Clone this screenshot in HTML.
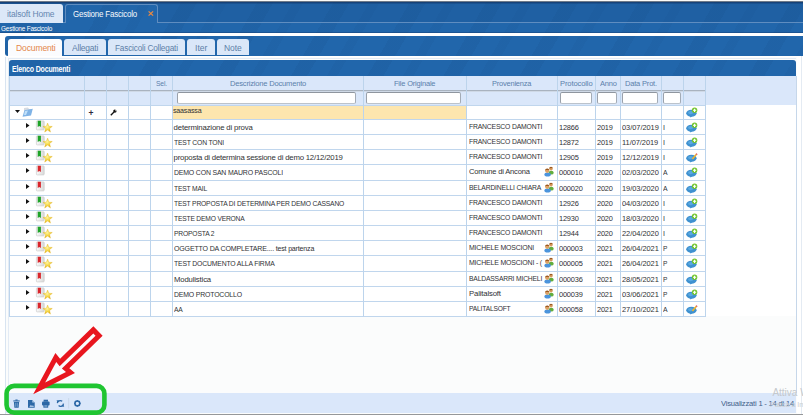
<!DOCTYPE html>
<html><head><meta charset="utf-8"><style>
*{margin:0;padding:0;box-sizing:border-box}
html,body{width:803px;height:418px;overflow:hidden;background:#fff;font-family:"Liberation Sans",sans-serif}
.a{position:absolute}
.bl{background-color:#2166ab;background-image:repeating-linear-gradient(120deg,rgba(0,0,0,0) 0 26px,rgba(8,36,80,.06) 26px 40px,rgba(0,0,0,0) 40px 57px,rgba(8,36,80,.04) 57px 66px);background-attachment:fixed}
.t{position:absolute;white-space:nowrap;line-height:1;transform-origin:0 0}
.ic{position:absolute;overflow:visible}
.vl{position:absolute;width:1px;background:#bcd4ec}
.hl{position:absolute;height:1px;background:#c0d6ed}
.inp{position:absolute;background:#fff;border:1px solid #a3abb5;border-top-color:#8f969f;border-left-color:#9aa1aa;border-bottom-color:#bcc3cb;border-radius:2px;height:12px;top:91.5px}
</style></head><body>

<div class="a" style="left:0;top:0;width:803px;height:1px;background:#fbfaf8"></div>
<div class="a" style="left:0;top:1px;width:803px;height:1px;background:#6f7a88"></div>
<div class="a bl" style="left:0;top:2px;width:803px;height:30.5px"></div>
<div class="a" style="left:0;top:2px;width:803px;height:20px;background:rgba(10,30,70,.07)"></div>
<div class="a" style="left:0;top:2px;width:803px;height:1px;background:rgba(10,30,70,.45)"></div>
<div class="a" style="left:0;top:3px;width:803px;height:1px;background:rgba(10,30,70,.2)"></div>
<div class="a" style="left:0;top:31.6px;width:803px;height:1px;background:rgba(10,30,70,.25)"></div>
<div class="a" style="left:0;top:22.4px;width:803px;height:1px;background:#5f8dc0"></div>
<div class="a" style="left:0;top:4.3px;width:63px;height:18.6px;background:#dce8f8;border-radius:0 3px 0 0"></div>
<div class="t" style="left:7.40px;top:10.39px;font-size:8.51px;color:#6486b0;letter-spacing:-0.146px;transform:scaleX(0.993);">italsoft Home</div>
<div class="a bl" style="left:65.3px;top:4.1px;width:92.5px;height:18.8px;border:1px solid #5f8dc0;border-bottom:none;border-radius:3px 3px 0 0"></div>
<div class="t" style="left:72.80px;top:10.24px;font-size:8.34px;color:#f6f9fc;letter-spacing:-0.200px;transform:scaleX(0.953);">Gestione Fascicolo</div>
<svg class="ic" style="left:147.6px;top:11.4px" width="6" height="5" viewBox="0 0 6 5"><path d="M0.6 0.4 L5.1 4.6 M5.1 0.4 L0.6 4.6" stroke="#f28a3c" stroke-width="1.25"/></svg>
<div class="t" style="left:1.00px;top:26.36px;font-size:6.66px;color:#ffffff;letter-spacing:-0.200px;transform:scaleX(0.963);">Gestione Fascicolo</div>
<div class="a bl" style="left:5px;top:35.5px;width:800px;height:20.5px;border-radius:3px 0 0 3px"></div>
<div class="a" style="left:5px;top:56.5px;width:792px;height:357px;background:#fbfcfc;border-left:1px solid #d8e4f1"></div>
<div class="a" style="left:7.5px;top:57.5px;width:788px;height:1px;background:#e3ebf5"></div>
<div class="a" style="left:7.5px;top:57.5px;width:1px;height:336px;background:#e3ebf5"></div>
<div class="a" style="left:7.8px;top:38.9px;width:54.5px;height:17.5px;background:#fbfcfe;border-radius:3px 3px 0 0"></div>
<div class="t" style="left:15.96px;top:43.85px;font-size:8.68px;color:#e4874a;letter-spacing:-0.168px;transform:scaleX(0.991);">Documenti</div>
<div class="a" style="left:64.4px;top:38.9px;width:41.599999999999994px;height:16.4px;background:#dae7f8;border-radius:3px 3px 0 0"></div>
<div class="t" style="left:71.99px;top:43.85px;font-size:8.68px;color:#5d7fa8;letter-spacing:-0.200px;transform:scaleX(0.976);">Allegati</div>
<div class="a" style="left:107.6px;top:38.9px;width:77.9px;height:16.4px;background:#dae7f8;border-radius:3px 3px 0 0"></div>
<div class="t" style="left:115.02px;top:43.85px;font-size:8.68px;color:#5d7fa8;letter-spacing:-0.200px;transform:scaleX(0.950);">Fascicoli Collegati</div>
<div class="a" style="left:187px;top:38.9px;width:28px;height:16.4px;background:#dae7f8;border-radius:3px 3px 0 0"></div>
<div class="t" style="left:194.80px;top:43.85px;font-size:8.68px;color:#5d7fa8;letter-spacing:0.040px;transform:scaleX(0.980);">Iter</div>
<div class="a" style="left:217px;top:38.9px;width:32.400000000000006px;height:16.4px;background:#dae7f8;border-radius:3px 3px 0 0"></div>
<div class="t" style="left:224.36px;top:43.85px;font-size:8.68px;color:#5d7fa8;letter-spacing:-0.098px;transform:scaleX(0.980);">Note</div>
<div class="a bl" style="left:9px;top:60px;width:787px;height:15.8px;border-radius:3px 3px 0 0"></div>
<div class="t" style="left:11.70px;top:65.59px;font-size:8.16px;color:#ffffff;font-weight:bold;letter-spacing:-0.200px;transform:scaleX(0.858);">Elenco Documenti</div>
<div class="a" style="left:9px;top:75.8px;width:787px;height:29.5px;background:#dae7fa"></div>
<div class="a" style="left:9px;top:90px;width:695.8px;height:1px;background:#a9b3bf"></div>
<div class="a" style="left:9px;top:91px;width:695.8px;height:1px;background:#cfd9e6"></div>
<div class="a" style="left:795.6px;top:75.8px;width:1px;height:317px;background:#c6d7ea"></div>
<div class="a" style="left:800.6px;top:56px;width:1px;height:358px;background:#e4ebf3"></div>
<div class="a" style="left:9px;top:105px;width:786.6px;height:211px;background:#fff"></div>
<div class="a" style="left:172.4px;top:105px;width:294.4px;height:14px;background:#fde6ae"></div>
<div class="hl" style="left:9px;top:105px;width:696.2px"></div>
<div class="hl" style="left:9px;top:119px;width:696.2px"></div>
<div class="hl" style="left:9px;top:134px;width:696.2px"></div>
<div class="hl" style="left:9px;top:149px;width:696.2px"></div>
<div class="hl" style="left:9px;top:164px;width:696.2px"></div>
<div class="hl" style="left:9px;top:180px;width:696.2px"></div>
<div class="hl" style="left:9px;top:195px;width:696.2px"></div>
<div class="hl" style="left:9px;top:210px;width:696.2px"></div>
<div class="hl" style="left:9px;top:225px;width:696.2px"></div>
<div class="hl" style="left:9px;top:240px;width:696.2px"></div>
<div class="hl" style="left:9px;top:255px;width:696.2px"></div>
<div class="hl" style="left:9px;top:271px;width:696.2px"></div>
<div class="hl" style="left:9px;top:286px;width:696.2px"></div>
<div class="hl" style="left:9px;top:301px;width:696.2px"></div>
<div class="hl" style="left:9px;top:316px;width:696.2px"></div>
<div class="vl" style="left:8.50px;top:76px;height:241px"></div>
<div class="vl" style="left:84.10px;top:76px;height:241px"></div>
<div class="vl" style="left:105.90px;top:76px;height:241px"></div>
<div class="vl" style="left:127.80px;top:76px;height:241px"></div>
<div class="vl" style="left:149.90px;top:76px;height:241px"></div>
<div class="vl" style="left:171.90px;top:76px;height:241px"></div>
<div class="vl" style="left:362.80px;top:76px;height:241px"></div>
<div class="vl" style="left:466.30px;top:76px;height:241px"></div>
<div class="vl" style="left:557.10px;top:76px;height:241px"></div>
<div class="vl" style="left:595.10px;top:76px;height:241px"></div>
<div class="vl" style="left:619.80px;top:76px;height:241px"></div>
<div class="vl" style="left:660.50px;top:76px;height:241px"></div>
<div class="vl" style="left:682.80px;top:76px;height:241px"></div>
<div class="vl" style="left:704.70px;top:76px;height:241px"></div>
<div class="t" style="left:155.84px;top:80.11px;font-size:7.67px;color:#5a7fab;letter-spacing:-0.200px;transform:scaleX(0.880);">Sel.</div>
<div class="t" style="left:229.63px;top:80.11px;font-size:7.67px;color:#5a7fab;letter-spacing:-0.200px;transform:scaleX(0.987);">Descrizione Documento</div>
<div class="t" style="left:394.25px;top:80.11px;font-size:7.67px;color:#5a7fab;letter-spacing:-0.200px;transform:scaleX(0.977);">File Originale</div>
<div class="t" style="left:492.47px;top:80.11px;font-size:7.67px;color:#5a7fab;letter-spacing:-0.200px;transform:scaleX(0.971);">Provenienza</div>
<div class="t" style="left:560.26px;top:80.11px;font-size:7.67px;color:#5a7fab;letter-spacing:-0.130px;transform:scaleX(0.992);">Protocollo</div>
<div class="t" style="left:599.51px;top:80.11px;font-size:7.67px;color:#5a7fab;letter-spacing:-0.200px;transform:scaleX(0.975);">Anno</div>
<div class="t" style="left:624.56px;top:80.11px;font-size:7.67px;color:#5a7fab;letter-spacing:-0.190px;transform:scaleX(0.980);">Data Prot.</div>
<div class="inp" style="left:177.1px;width:178.6px"></div>
<div class="inp" style="left:366.2px;width:95.30000000000001px"></div>
<div class="inp" style="left:559.5px;width:32.5px"></div>
<div class="inp" style="left:596.7px;width:20.699999999999932px"></div>
<div class="inp" style="left:622.3px;width:35.40000000000009px"></div>
<div class="inp" style="left:662.6px;width:18.0px"></div>
<svg class="ic" style="left:15px;top:110px" width="5" height="3" viewBox="0 0 5 3"><path d="M0 0 H5 L2.5 3 Z" fill="#111"/></svg>
<svg class="ic" style="left:22px;top:107px" width="11" height="10" viewBox="0 0 11 10"><path d="M2 1 L6 0.5 L7 2 L9 2 L9 6 L2 8 Z" fill="#d6dbe2"/><path d="M0.5 9.8 L2.5 3.2 L10.8 1.8 L9 8.6 Z" fill="#7fb3e6"/><path d="M2 8 L3 4 L6 3.5 L4 8 Z" fill="#bfe0fa"/></svg>
<div class="t" style="left:88.6px;top:109.3px;font-size:8.5px;color:#2a2a3a;font-weight:bold">+</div>
<svg class="ic" style="left:109.8px;top:108.7px" width="7" height="7" viewBox="0 0 7 7"><path d="M0.8 6.2 L4 3" stroke="#111" stroke-width="1.3"/><circle cx="4.9" cy="2.1" r="1.7" fill="#111"/><path d="M5.2 0.2 L6.9 1.9 L5.6 2.2 Z" fill="#fff"/></svg>
<div class="t" style="left:173.40px;top:107.31px;font-size:7.78px;color:#303135;letter-spacing:-0.200px;transform:scaleX(0.912);">saasassa</div>
<svg class="ic" style="left:685.5px;top:106.9px" width="12" height="11" viewBox="0 0 12 11"><ellipse cx="5.4" cy="6.3" rx="5.2" ry="3.5" fill="#3f91d0"/><ellipse cx="4.6" cy="5.6" rx="2.6" ry="1.6" fill="#5aa8e0"/><path d="M3.8 8.8 L4.4 10.6 L6.4 9.2 Z" fill="#3f91d0"/><circle cx="8.6" cy="3.3" r="2.7" fill="#72c52e"/><path d="M8.6 1.7 V4.9 M7 3.3 H10.2" stroke="#fff" stroke-width="1.1"/></svg>
<svg class="ic" style="left:26.2px;top:122.7px" width="4" height="5" viewBox="0 0 4 5"><path d="M0 0 L3.5 2.5 L0 5 Z" fill="#111"/></svg>
<svg class="ic" style="left:36px;top:120px" width="18" height="13" viewBox="0 0 18 13"><defs><linearGradient id="dg" x1="0" x2="1"><stop offset="0" stop-color="#fafafa"/><stop offset="1" stop-color="#d8d8d8"/></linearGradient><radialGradient id="sg" cx="0.45" cy="0.4" r="0.6"><stop offset="0" stop-color="#fff6a0"/><stop offset="0.6" stop-color="#f3d23a"/><stop offset="1" stop-color="#d9a514"/></radialGradient></defs><rect x="0.4" y="0.9" width="7.8" height="9" rx="0.8" fill="url(#dg)" stroke="#cdcdcd" stroke-width="0.7"/><path d="M1.7 0.8 H4.9 V7.1 L3.3 6 L1.7 7.1 Z" fill="#1fa328"/><path d="M11.60 3.00 L12.88 6.25 L16.3 6.45 L13.60 8.60 L14.50 12.10 L11.60 10.10 L8.70 12.10 L9.60 8.60 L6.9 6.45 L10.32 6.25 Z" fill="url(#sg)" stroke="#e2b524" stroke-width="0.35"/></svg>
<div class="t" style="left:173.60px;top:123.91px;font-size:7.78px;color:#303135;letter-spacing:-0.167px;">determinazione di prova</div>
<div class="t" style="left:468.60px;top:123.31px;font-size:7.78px;color:#303135;letter-spacing:-0.200px;transform:scaleX(0.878);">FRANCESCO DAMONTI</div>
<div class="t" style="left:559.20px;top:124.41px;font-size:7.78px;color:#303135;letter-spacing:-0.200px;transform:scaleX(0.953);">12866</div>
<div class="t" style="left:596.80px;top:124.41px;font-size:7.78px;color:#303135;letter-spacing:-0.200px;transform:scaleX(0.951);">2019</div>
<div class="t" style="left:621.50px;top:124.41px;font-size:7.78px;color:#303135;letter-spacing:-0.058px;transform:scaleX(0.960);">03/07/2019</div>
<div class="t" style="left:662.60px;top:124.41px;font-size:7.78px;color:#303135;letter-spacing:-0.056px;transform:scaleX(0.920);">I</div>
<svg class="ic" style="left:685.8px;top:121.5px" width="12" height="11" viewBox="0 0 12 11"><ellipse cx="5.4" cy="6.3" rx="5.2" ry="3.5" fill="#3f91d0"/><ellipse cx="4.6" cy="5.6" rx="2.6" ry="1.6" fill="#5aa8e0"/><path d="M3.8 8.8 L4.4 10.6 L6.4 9.2 Z" fill="#3f91d0"/><circle cx="8.6" cy="3.3" r="2.7" fill="#72c52e"/><path d="M8.6 1.7 V4.9 M7 3.3 H10.2" stroke="#fff" stroke-width="1.1"/></svg>
<svg class="ic" style="left:26.2px;top:137.7px" width="4" height="5" viewBox="0 0 4 5"><path d="M0 0 L3.5 2.5 L0 5 Z" fill="#111"/></svg>
<svg class="ic" style="left:36px;top:135px" width="18" height="13" viewBox="0 0 18 13"><defs><linearGradient id="dg" x1="0" x2="1"><stop offset="0" stop-color="#fafafa"/><stop offset="1" stop-color="#d8d8d8"/></linearGradient><radialGradient id="sg" cx="0.45" cy="0.4" r="0.6"><stop offset="0" stop-color="#fff6a0"/><stop offset="0.6" stop-color="#f3d23a"/><stop offset="1" stop-color="#d9a514"/></radialGradient></defs><rect x="0.4" y="0.9" width="7.8" height="9" rx="0.8" fill="url(#dg)" stroke="#cdcdcd" stroke-width="0.7"/><path d="M1.7 0.8 H4.9 V7.1 L3.3 6 L1.7 7.1 Z" fill="#1fa328"/><path d="M11.60 3.00 L12.88 6.25 L16.3 6.45 L13.60 8.60 L14.50 12.10 L11.60 10.10 L8.70 12.10 L9.60 8.60 L6.9 6.45 L10.32 6.25 Z" fill="url(#sg)" stroke="#e2b524" stroke-width="0.35"/></svg>
<div class="t" style="left:173.60px;top:138.91px;font-size:7.78px;color:#303135;letter-spacing:-0.200px;transform:scaleX(0.876);">TEST CON TONI</div>
<div class="t" style="left:468.60px;top:138.31px;font-size:7.78px;color:#303135;letter-spacing:-0.200px;transform:scaleX(0.878);">FRANCESCO DAMONTI</div>
<div class="t" style="left:559.20px;top:139.41px;font-size:7.78px;color:#303135;letter-spacing:-0.200px;transform:scaleX(0.953);">12872</div>
<div class="t" style="left:596.80px;top:139.41px;font-size:7.78px;color:#303135;letter-spacing:-0.200px;transform:scaleX(0.951);">2019</div>
<div class="t" style="left:621.50px;top:139.41px;font-size:7.78px;color:#303135;letter-spacing:-0.058px;transform:scaleX(0.960);">11/07/2019</div>
<div class="t" style="left:662.60px;top:139.41px;font-size:7.78px;color:#303135;letter-spacing:-0.056px;transform:scaleX(0.920);">I</div>
<svg class="ic" style="left:685.8px;top:136.5px" width="12" height="11" viewBox="0 0 12 11"><ellipse cx="5.4" cy="6.3" rx="5.2" ry="3.5" fill="#3f91d0"/><ellipse cx="4.6" cy="5.6" rx="2.6" ry="1.6" fill="#5aa8e0"/><path d="M3.8 8.8 L4.4 10.6 L6.4 9.2 Z" fill="#3f91d0"/><circle cx="8.6" cy="3.3" r="2.7" fill="#72c52e"/><path d="M8.6 1.7 V4.9 M7 3.3 H10.2" stroke="#fff" stroke-width="1.1"/></svg>
<svg class="ic" style="left:26.2px;top:152.7px" width="4" height="5" viewBox="0 0 4 5"><path d="M0 0 L3.5 2.5 L0 5 Z" fill="#111"/></svg>
<svg class="ic" style="left:36px;top:150px" width="18" height="13" viewBox="0 0 18 13"><defs><linearGradient id="dg" x1="0" x2="1"><stop offset="0" stop-color="#fafafa"/><stop offset="1" stop-color="#d8d8d8"/></linearGradient><radialGradient id="sg" cx="0.45" cy="0.4" r="0.6"><stop offset="0" stop-color="#fff6a0"/><stop offset="0.6" stop-color="#f3d23a"/><stop offset="1" stop-color="#d9a514"/></radialGradient></defs><rect x="0.4" y="0.9" width="7.8" height="9" rx="0.8" fill="url(#dg)" stroke="#cdcdcd" stroke-width="0.7"/><path d="M1.7 0.8 H4.9 V7.1 L3.3 6 L1.7 7.1 Z" fill="#1fa328"/><path d="M11.60 3.00 L12.88 6.25 L16.3 6.45 L13.60 8.60 L14.50 12.10 L11.60 10.10 L8.70 12.10 L9.60 8.60 L6.9 6.45 L10.32 6.25 Z" fill="url(#sg)" stroke="#e2b524" stroke-width="0.35"/></svg>
<div class="t" style="left:173.60px;top:153.91px;font-size:7.78px;color:#303135;letter-spacing:-0.198px;">proposta di determina sessione di demo 12/12/2019</div>
<div class="t" style="left:468.60px;top:153.31px;font-size:7.78px;color:#303135;letter-spacing:-0.200px;transform:scaleX(0.878);">FRANCESCO DAMONTI</div>
<div class="t" style="left:559.20px;top:154.41px;font-size:7.78px;color:#303135;letter-spacing:-0.200px;transform:scaleX(0.953);">12905</div>
<div class="t" style="left:596.80px;top:154.41px;font-size:7.78px;color:#303135;letter-spacing:-0.200px;transform:scaleX(0.951);">2019</div>
<div class="t" style="left:621.50px;top:154.41px;font-size:7.78px;color:#303135;letter-spacing:-0.058px;transform:scaleX(0.960);">12/12/2019</div>
<div class="t" style="left:662.60px;top:154.41px;font-size:7.78px;color:#303135;letter-spacing:-0.056px;transform:scaleX(0.920);">I</div>
<svg class="ic" style="left:685.8px;top:151.5px" width="12" height="11" viewBox="0 0 12 11"><ellipse cx="5.4" cy="6.3" rx="5.2" ry="3.5" fill="#3f91d0"/><ellipse cx="4.6" cy="5.6" rx="2.6" ry="1.6" fill="#5aa8e0"/><path d="M3.8 8.8 L4.4 10.6 L6.4 9.2 Z" fill="#3f91d0"/><path d="M5.8 6.5 L9.6 2 L10.8 3 L7 7.5 Z" fill="#f0b42a"/><path d="M9.6 2 L10.4 1.2 L11.6 2.2 L10.8 3 Z" fill="#d8403a"/></svg>
<svg class="ic" style="left:26.2px;top:167.7px" width="4" height="5" viewBox="0 0 4 5"><path d="M0 0 L3.5 2.5 L0 5 Z" fill="#111"/></svg>
<svg class="ic" style="left:36px;top:165px" width="18" height="13" viewBox="0 0 18 13"><defs><linearGradient id="dg" x1="0" x2="1"><stop offset="0" stop-color="#fafafa"/><stop offset="1" stop-color="#d8d8d8"/></linearGradient><radialGradient id="sg" cx="0.45" cy="0.4" r="0.6"><stop offset="0" stop-color="#fff6a0"/><stop offset="0.6" stop-color="#f3d23a"/><stop offset="1" stop-color="#d9a514"/></radialGradient></defs><rect x="0.4" y="0.9" width="7.8" height="9" rx="0.8" fill="url(#dg)" stroke="#cdcdcd" stroke-width="0.7"/><path d="M1.7 0.8 H4.9 V7.1 L3.3 6 L1.7 7.1 Z" fill="#d9262c"/></svg>
<div class="t" style="left:173.60px;top:168.91px;font-size:7.78px;color:#303135;letter-spacing:-0.200px;transform:scaleX(0.893);">DEMO CON SAN MAURO PASCOLI</div>
<div class="t" style="left:468.60px;top:168.31px;font-size:7.78px;color:#303135;letter-spacing:-0.200px;transform:scaleX(0.972);">Comune di Ancona</div>
<svg class="ic" style="left:543.5px;top:166px" width="11" height="11" viewBox="0 0 11 11"><ellipse cx="7.2" cy="6.7" rx="2.5" ry="1.9" fill="#62ad3e"/><circle cx="7.0" cy="2.7" r="1.8" fill="#d79a5c"/><path d="M5.2 2.6 A1.8 1.8 0 0 1 8.8 2.6 L8.3 2.0 L6 2.2 Z" fill="#9a5a22"/><ellipse cx="3.6" cy="8.6" rx="3.2" ry="2.0" fill="#4b94dc"/><circle cx="3.2" cy="4.8" r="2.1" fill="#dca064"/><path d="M1.1 4.7 A2.1 2.1 0 0 1 5.3 4.7 L4.6 3.9 L2 4.1 Z" fill="#9c5a20"/></svg>
<div class="t" style="left:559.20px;top:169.41px;font-size:7.78px;color:#303135;letter-spacing:-0.200px;transform:scaleX(0.955);">000010</div>
<div class="t" style="left:596.80px;top:169.41px;font-size:7.78px;color:#303135;letter-spacing:-0.200px;transform:scaleX(0.951);">2020</div>
<div class="t" style="left:621.50px;top:169.41px;font-size:7.78px;color:#303135;letter-spacing:-0.058px;transform:scaleX(0.960);">02/03/2020</div>
<div class="t" style="left:662.60px;top:169.41px;font-size:7.78px;color:#303135;letter-spacing:-0.200px;transform:scaleX(0.881);">A</div>
<svg class="ic" style="left:685.8px;top:166.5px" width="12" height="11" viewBox="0 0 12 11"><ellipse cx="5.4" cy="6.3" rx="5.2" ry="3.5" fill="#3f91d0"/><ellipse cx="4.6" cy="5.6" rx="2.6" ry="1.6" fill="#5aa8e0"/><path d="M3.8 8.8 L4.4 10.6 L6.4 9.2 Z" fill="#3f91d0"/><circle cx="8.6" cy="3.3" r="2.7" fill="#72c52e"/><path d="M8.6 1.7 V4.9 M7 3.3 H10.2" stroke="#fff" stroke-width="1.1"/></svg>
<svg class="ic" style="left:26.2px;top:183.7px" width="4" height="5" viewBox="0 0 4 5"><path d="M0 0 L3.5 2.5 L0 5 Z" fill="#111"/></svg>
<svg class="ic" style="left:36px;top:181px" width="18" height="13" viewBox="0 0 18 13"><defs><linearGradient id="dg" x1="0" x2="1"><stop offset="0" stop-color="#fafafa"/><stop offset="1" stop-color="#d8d8d8"/></linearGradient><radialGradient id="sg" cx="0.45" cy="0.4" r="0.6"><stop offset="0" stop-color="#fff6a0"/><stop offset="0.6" stop-color="#f3d23a"/><stop offset="1" stop-color="#d9a514"/></radialGradient></defs><rect x="0.4" y="0.9" width="7.8" height="9" rx="0.8" fill="url(#dg)" stroke="#cdcdcd" stroke-width="0.7"/><path d="M1.7 0.8 H4.9 V7.1 L3.3 6 L1.7 7.1 Z" fill="#d9262c"/></svg>
<div class="t" style="left:173.60px;top:184.91px;font-size:7.78px;color:#303135;letter-spacing:-0.200px;transform:scaleX(0.863);">TEST MAIL</div>
<div class="t" style="left:468.60px;top:184.31px;font-size:7.78px;color:#303135;letter-spacing:-0.200px;transform:scaleX(0.874);">BELARDINELLI CHIARA</div>
<svg class="ic" style="left:543.5px;top:182px" width="11" height="11" viewBox="0 0 11 11"><ellipse cx="7.2" cy="6.7" rx="2.5" ry="1.9" fill="#62ad3e"/><circle cx="7.0" cy="2.7" r="1.8" fill="#d79a5c"/><path d="M5.2 2.6 A1.8 1.8 0 0 1 8.8 2.6 L8.3 2.0 L6 2.2 Z" fill="#9a5a22"/><ellipse cx="3.6" cy="8.6" rx="3.2" ry="2.0" fill="#4b94dc"/><circle cx="3.2" cy="4.8" r="2.1" fill="#dca064"/><path d="M1.1 4.7 A2.1 2.1 0 0 1 5.3 4.7 L4.6 3.9 L2 4.1 Z" fill="#9c5a20"/></svg>
<div class="t" style="left:559.20px;top:185.41px;font-size:7.78px;color:#303135;letter-spacing:-0.200px;transform:scaleX(0.955);">000020</div>
<div class="t" style="left:596.80px;top:185.41px;font-size:7.78px;color:#303135;letter-spacing:-0.200px;transform:scaleX(0.951);">2020</div>
<div class="t" style="left:621.50px;top:185.41px;font-size:7.78px;color:#303135;letter-spacing:-0.058px;transform:scaleX(0.960);">19/03/2020</div>
<div class="t" style="left:662.60px;top:185.41px;font-size:7.78px;color:#303135;letter-spacing:-0.200px;transform:scaleX(0.881);">A</div>
<svg class="ic" style="left:685.8px;top:182.5px" width="12" height="11" viewBox="0 0 12 11"><ellipse cx="5.4" cy="6.3" rx="5.2" ry="3.5" fill="#3f91d0"/><ellipse cx="4.6" cy="5.6" rx="2.6" ry="1.6" fill="#5aa8e0"/><path d="M3.8 8.8 L4.4 10.6 L6.4 9.2 Z" fill="#3f91d0"/><circle cx="8.6" cy="3.3" r="2.7" fill="#72c52e"/><path d="M8.6 1.7 V4.9 M7 3.3 H10.2" stroke="#fff" stroke-width="1.1"/></svg>
<svg class="ic" style="left:26.2px;top:198.7px" width="4" height="5" viewBox="0 0 4 5"><path d="M0 0 L3.5 2.5 L0 5 Z" fill="#111"/></svg>
<svg class="ic" style="left:36px;top:196px" width="18" height="13" viewBox="0 0 18 13"><defs><linearGradient id="dg" x1="0" x2="1"><stop offset="0" stop-color="#fafafa"/><stop offset="1" stop-color="#d8d8d8"/></linearGradient><radialGradient id="sg" cx="0.45" cy="0.4" r="0.6"><stop offset="0" stop-color="#fff6a0"/><stop offset="0.6" stop-color="#f3d23a"/><stop offset="1" stop-color="#d9a514"/></radialGradient></defs><rect x="0.4" y="0.9" width="7.8" height="9" rx="0.8" fill="url(#dg)" stroke="#cdcdcd" stroke-width="0.7"/><path d="M1.7 0.8 H4.9 V7.1 L3.3 6 L1.7 7.1 Z" fill="#1fa328"/><path d="M11.60 3.00 L12.88 6.25 L16.3 6.45 L13.60 8.60 L14.50 12.10 L11.60 10.10 L8.70 12.10 L9.60 8.60 L6.9 6.45 L10.32 6.25 Z" fill="url(#sg)" stroke="#e2b524" stroke-width="0.35"/></svg>
<div class="t" style="left:173.60px;top:199.91px;font-size:7.78px;color:#303135;letter-spacing:-0.200px;transform:scaleX(0.866);">TEST PROPOSTA DI DETERMINA PER DEMO CASSANO</div>
<div class="t" style="left:468.60px;top:199.31px;font-size:7.78px;color:#303135;letter-spacing:-0.200px;transform:scaleX(0.878);">FRANCESCO DAMONTI</div>
<div class="t" style="left:559.20px;top:200.41px;font-size:7.78px;color:#303135;letter-spacing:-0.200px;transform:scaleX(0.953);">12926</div>
<div class="t" style="left:596.80px;top:200.41px;font-size:7.78px;color:#303135;letter-spacing:-0.200px;transform:scaleX(0.951);">2020</div>
<div class="t" style="left:621.50px;top:200.41px;font-size:7.78px;color:#303135;letter-spacing:-0.058px;transform:scaleX(0.960);">04/03/2020</div>
<div class="t" style="left:662.60px;top:200.41px;font-size:7.78px;color:#303135;letter-spacing:-0.056px;transform:scaleX(0.920);">I</div>
<svg class="ic" style="left:685.8px;top:197.5px" width="12" height="11" viewBox="0 0 12 11"><ellipse cx="5.4" cy="6.3" rx="5.2" ry="3.5" fill="#3f91d0"/><ellipse cx="4.6" cy="5.6" rx="2.6" ry="1.6" fill="#5aa8e0"/><path d="M3.8 8.8 L4.4 10.6 L6.4 9.2 Z" fill="#3f91d0"/><circle cx="8.6" cy="3.3" r="2.7" fill="#72c52e"/><path d="M8.6 1.7 V4.9 M7 3.3 H10.2" stroke="#fff" stroke-width="1.1"/></svg>
<svg class="ic" style="left:26.2px;top:213.7px" width="4" height="5" viewBox="0 0 4 5"><path d="M0 0 L3.5 2.5 L0 5 Z" fill="#111"/></svg>
<svg class="ic" style="left:36px;top:211px" width="18" height="13" viewBox="0 0 18 13"><defs><linearGradient id="dg" x1="0" x2="1"><stop offset="0" stop-color="#fafafa"/><stop offset="1" stop-color="#d8d8d8"/></linearGradient><radialGradient id="sg" cx="0.45" cy="0.4" r="0.6"><stop offset="0" stop-color="#fff6a0"/><stop offset="0.6" stop-color="#f3d23a"/><stop offset="1" stop-color="#d9a514"/></radialGradient></defs><rect x="0.4" y="0.9" width="7.8" height="9" rx="0.8" fill="url(#dg)" stroke="#cdcdcd" stroke-width="0.7"/><path d="M1.7 0.8 H4.9 V7.1 L3.3 6 L1.7 7.1 Z" fill="#1fa328"/><path d="M11.60 3.00 L12.88 6.25 L16.3 6.45 L13.60 8.60 L14.50 12.10 L11.60 10.10 L8.70 12.10 L9.60 8.60 L6.9 6.45 L10.32 6.25 Z" fill="url(#sg)" stroke="#e2b524" stroke-width="0.35"/></svg>
<div class="t" style="left:173.60px;top:214.91px;font-size:7.78px;color:#303135;letter-spacing:-0.200px;transform:scaleX(0.860);">TESTE DEMO VERONA</div>
<div class="t" style="left:468.60px;top:214.31px;font-size:7.78px;color:#303135;letter-spacing:-0.200px;transform:scaleX(0.878);">FRANCESCO DAMONTI</div>
<div class="t" style="left:559.20px;top:215.41px;font-size:7.78px;color:#303135;letter-spacing:-0.200px;transform:scaleX(0.953);">12930</div>
<div class="t" style="left:596.80px;top:215.41px;font-size:7.78px;color:#303135;letter-spacing:-0.200px;transform:scaleX(0.951);">2020</div>
<div class="t" style="left:621.50px;top:215.41px;font-size:7.78px;color:#303135;letter-spacing:-0.058px;transform:scaleX(0.960);">18/03/2020</div>
<div class="t" style="left:662.60px;top:215.41px;font-size:7.78px;color:#303135;letter-spacing:-0.056px;transform:scaleX(0.920);">I</div>
<svg class="ic" style="left:685.8px;top:212.5px" width="12" height="11" viewBox="0 0 12 11"><ellipse cx="5.4" cy="6.3" rx="5.2" ry="3.5" fill="#3f91d0"/><ellipse cx="4.6" cy="5.6" rx="2.6" ry="1.6" fill="#5aa8e0"/><path d="M3.8 8.8 L4.4 10.6 L6.4 9.2 Z" fill="#3f91d0"/><circle cx="8.6" cy="3.3" r="2.7" fill="#72c52e"/><path d="M8.6 1.7 V4.9 M7 3.3 H10.2" stroke="#fff" stroke-width="1.1"/></svg>
<svg class="ic" style="left:26.2px;top:228.7px" width="4" height="5" viewBox="0 0 4 5"><path d="M0 0 L3.5 2.5 L0 5 Z" fill="#111"/></svg>
<svg class="ic" style="left:36px;top:226px" width="18" height="13" viewBox="0 0 18 13"><defs><linearGradient id="dg" x1="0" x2="1"><stop offset="0" stop-color="#fafafa"/><stop offset="1" stop-color="#d8d8d8"/></linearGradient><radialGradient id="sg" cx="0.45" cy="0.4" r="0.6"><stop offset="0" stop-color="#fff6a0"/><stop offset="0.6" stop-color="#f3d23a"/><stop offset="1" stop-color="#d9a514"/></radialGradient></defs><rect x="0.4" y="0.9" width="7.8" height="9" rx="0.8" fill="url(#dg)" stroke="#cdcdcd" stroke-width="0.7"/><path d="M1.7 0.8 H4.9 V7.1 L3.3 6 L1.7 7.1 Z" fill="#1fa328"/><path d="M11.60 3.00 L12.88 6.25 L16.3 6.45 L13.60 8.60 L14.50 12.10 L11.60 10.10 L8.70 12.10 L9.60 8.60 L6.9 6.45 L10.32 6.25 Z" fill="url(#sg)" stroke="#e2b524" stroke-width="0.35"/></svg>
<div class="t" style="left:173.60px;top:229.91px;font-size:7.78px;color:#303135;letter-spacing:-0.200px;transform:scaleX(0.865);">PROPOSTA 2</div>
<div class="t" style="left:468.60px;top:229.31px;font-size:7.78px;color:#303135;letter-spacing:-0.200px;transform:scaleX(0.878);">FRANCESCO DAMONTI</div>
<div class="t" style="left:559.20px;top:230.41px;font-size:7.78px;color:#303135;letter-spacing:-0.200px;transform:scaleX(0.953);">12944</div>
<div class="t" style="left:596.80px;top:230.41px;font-size:7.78px;color:#303135;letter-spacing:-0.200px;transform:scaleX(0.951);">2020</div>
<div class="t" style="left:621.50px;top:230.41px;font-size:7.78px;color:#303135;letter-spacing:-0.058px;transform:scaleX(0.960);">22/04/2020</div>
<div class="t" style="left:662.60px;top:230.41px;font-size:7.78px;color:#303135;letter-spacing:-0.056px;transform:scaleX(0.920);">I</div>
<svg class="ic" style="left:685.8px;top:227.5px" width="12" height="11" viewBox="0 0 12 11"><ellipse cx="5.4" cy="6.3" rx="5.2" ry="3.5" fill="#3f91d0"/><ellipse cx="4.6" cy="5.6" rx="2.6" ry="1.6" fill="#5aa8e0"/><path d="M3.8 8.8 L4.4 10.6 L6.4 9.2 Z" fill="#3f91d0"/><circle cx="8.6" cy="3.3" r="2.7" fill="#72c52e"/><path d="M8.6 1.7 V4.9 M7 3.3 H10.2" stroke="#fff" stroke-width="1.1"/></svg>
<svg class="ic" style="left:26.2px;top:243.7px" width="4" height="5" viewBox="0 0 4 5"><path d="M0 0 L3.5 2.5 L0 5 Z" fill="#111"/></svg>
<svg class="ic" style="left:36px;top:241px" width="18" height="13" viewBox="0 0 18 13"><defs><linearGradient id="dg" x1="0" x2="1"><stop offset="0" stop-color="#fafafa"/><stop offset="1" stop-color="#d8d8d8"/></linearGradient><radialGradient id="sg" cx="0.45" cy="0.4" r="0.6"><stop offset="0" stop-color="#fff6a0"/><stop offset="0.6" stop-color="#f3d23a"/><stop offset="1" stop-color="#d9a514"/></radialGradient></defs><rect x="0.4" y="0.9" width="7.8" height="9" rx="0.8" fill="url(#dg)" stroke="#cdcdcd" stroke-width="0.7"/><path d="M1.7 0.8 H4.9 V7.1 L3.3 6 L1.7 7.1 Z" fill="#d9262c"/><path d="M11.60 3.00 L12.88 6.25 L16.3 6.45 L13.60 8.60 L14.50 12.10 L11.60 10.10 L8.70 12.10 L9.60 8.60 L6.9 6.45 L10.32 6.25 Z" fill="url(#sg)" stroke="#e2b524" stroke-width="0.35"/></svg>
<div class="t" style="left:173.60px;top:244.91px;font-size:7.78px;color:#303135;letter-spacing:-0.200px;transform:scaleX(0.909);">OGGETTO DA COMPLETARE.... test partenza</div>
<div class="t" style="left:468.60px;top:244.31px;font-size:7.78px;color:#303135;letter-spacing:-0.200px;transform:scaleX(0.895);">MICHELE MOSCIONI</div>
<svg class="ic" style="left:543.5px;top:242px" width="11" height="11" viewBox="0 0 11 11"><ellipse cx="7.2" cy="6.7" rx="2.5" ry="1.9" fill="#62ad3e"/><circle cx="7.0" cy="2.7" r="1.8" fill="#d79a5c"/><path d="M5.2 2.6 A1.8 1.8 0 0 1 8.8 2.6 L8.3 2.0 L6 2.2 Z" fill="#9a5a22"/><ellipse cx="3.6" cy="8.6" rx="3.2" ry="2.0" fill="#4b94dc"/><circle cx="3.2" cy="4.8" r="2.1" fill="#dca064"/><path d="M1.1 4.7 A2.1 2.1 0 0 1 5.3 4.7 L4.6 3.9 L2 4.1 Z" fill="#9c5a20"/></svg>
<div class="t" style="left:559.20px;top:245.41px;font-size:7.78px;color:#303135;letter-spacing:-0.200px;transform:scaleX(0.955);">000003</div>
<div class="t" style="left:596.80px;top:245.41px;font-size:7.78px;color:#303135;letter-spacing:-0.200px;transform:scaleX(0.951);">2021</div>
<div class="t" style="left:621.50px;top:245.41px;font-size:7.78px;color:#303135;letter-spacing:-0.058px;transform:scaleX(0.960);">26/04/2021</div>
<div class="t" style="left:662.60px;top:245.41px;font-size:7.78px;color:#303135;letter-spacing:-0.200px;transform:scaleX(0.852);">P</div>
<svg class="ic" style="left:685.8px;top:242.5px" width="12" height="11" viewBox="0 0 12 11"><ellipse cx="5.4" cy="6.3" rx="5.2" ry="3.5" fill="#3f91d0"/><ellipse cx="4.6" cy="5.6" rx="2.6" ry="1.6" fill="#5aa8e0"/><path d="M3.8 8.8 L4.4 10.6 L6.4 9.2 Z" fill="#3f91d0"/><circle cx="8.6" cy="3.3" r="2.7" fill="#72c52e"/><path d="M8.6 1.7 V4.9 M7 3.3 H10.2" stroke="#fff" stroke-width="1.1"/></svg>
<svg class="ic" style="left:26.2px;top:258.7px" width="4" height="5" viewBox="0 0 4 5"><path d="M0 0 L3.5 2.5 L0 5 Z" fill="#111"/></svg>
<svg class="ic" style="left:36px;top:256px" width="18" height="13" viewBox="0 0 18 13"><defs><linearGradient id="dg" x1="0" x2="1"><stop offset="0" stop-color="#fafafa"/><stop offset="1" stop-color="#d8d8d8"/></linearGradient><radialGradient id="sg" cx="0.45" cy="0.4" r="0.6"><stop offset="0" stop-color="#fff6a0"/><stop offset="0.6" stop-color="#f3d23a"/><stop offset="1" stop-color="#d9a514"/></radialGradient></defs><rect x="0.4" y="0.9" width="7.8" height="9" rx="0.8" fill="url(#dg)" stroke="#cdcdcd" stroke-width="0.7"/><path d="M1.7 0.8 H4.9 V7.1 L3.3 6 L1.7 7.1 Z" fill="#d9262c"/><path d="M11.60 3.00 L12.88 6.25 L16.3 6.45 L13.60 8.60 L14.50 12.10 L11.60 10.10 L8.70 12.10 L9.60 8.60 L6.9 6.45 L10.32 6.25 Z" fill="url(#sg)" stroke="#e2b524" stroke-width="0.35"/></svg>
<div class="t" style="left:173.60px;top:259.91px;font-size:7.78px;color:#303135;letter-spacing:-0.200px;transform:scaleX(0.880);">TEST DOCUMENTO ALLA FIRMA</div>
<div class="t" style="left:468.60px;top:259.31px;font-size:7.78px;color:#303135;letter-spacing:-0.200px;transform:scaleX(0.896);">MICHELE MOSCIONI - (</div>
<svg class="ic" style="left:543.5px;top:257px" width="11" height="11" viewBox="0 0 11 11"><ellipse cx="7.2" cy="6.7" rx="2.5" ry="1.9" fill="#62ad3e"/><circle cx="7.0" cy="2.7" r="1.8" fill="#d79a5c"/><path d="M5.2 2.6 A1.8 1.8 0 0 1 8.8 2.6 L8.3 2.0 L6 2.2 Z" fill="#9a5a22"/><ellipse cx="3.6" cy="8.6" rx="3.2" ry="2.0" fill="#4b94dc"/><circle cx="3.2" cy="4.8" r="2.1" fill="#dca064"/><path d="M1.1 4.7 A2.1 2.1 0 0 1 5.3 4.7 L4.6 3.9 L2 4.1 Z" fill="#9c5a20"/></svg>
<div class="t" style="left:559.20px;top:260.41px;font-size:7.78px;color:#303135;letter-spacing:-0.200px;transform:scaleX(0.955);">000005</div>
<div class="t" style="left:596.80px;top:260.41px;font-size:7.78px;color:#303135;letter-spacing:-0.200px;transform:scaleX(0.951);">2021</div>
<div class="t" style="left:621.50px;top:260.41px;font-size:7.78px;color:#303135;letter-spacing:-0.058px;transform:scaleX(0.960);">26/04/2021</div>
<div class="t" style="left:662.60px;top:260.41px;font-size:7.78px;color:#303135;letter-spacing:-0.200px;transform:scaleX(0.852);">P</div>
<svg class="ic" style="left:685.8px;top:257.5px" width="12" height="11" viewBox="0 0 12 11"><ellipse cx="5.4" cy="6.3" rx="5.2" ry="3.5" fill="#3f91d0"/><ellipse cx="4.6" cy="5.6" rx="2.6" ry="1.6" fill="#5aa8e0"/><path d="M3.8 8.8 L4.4 10.6 L6.4 9.2 Z" fill="#3f91d0"/><circle cx="8.6" cy="3.3" r="2.7" fill="#72c52e"/><path d="M8.6 1.7 V4.9 M7 3.3 H10.2" stroke="#fff" stroke-width="1.1"/></svg>
<svg class="ic" style="left:26.2px;top:274.7px" width="4" height="5" viewBox="0 0 4 5"><path d="M0 0 L3.5 2.5 L0 5 Z" fill="#111"/></svg>
<svg class="ic" style="left:36px;top:272px" width="18" height="13" viewBox="0 0 18 13"><defs><linearGradient id="dg" x1="0" x2="1"><stop offset="0" stop-color="#fafafa"/><stop offset="1" stop-color="#d8d8d8"/></linearGradient><radialGradient id="sg" cx="0.45" cy="0.4" r="0.6"><stop offset="0" stop-color="#fff6a0"/><stop offset="0.6" stop-color="#f3d23a"/><stop offset="1" stop-color="#d9a514"/></radialGradient></defs><rect x="0.4" y="0.9" width="7.8" height="9" rx="0.8" fill="url(#dg)" stroke="#cdcdcd" stroke-width="0.7"/><path d="M1.7 0.8 H4.9 V7.1 L3.3 6 L1.7 7.1 Z" fill="#d9262c"/></svg>
<div class="t" style="left:173.60px;top:275.91px;font-size:7.78px;color:#303135;letter-spacing:-0.145px;transform:scaleX(0.993);">Modulistica</div>
<div class="t" style="left:468.60px;top:275.31px;font-size:7.78px;color:#303135;letter-spacing:-0.200px;transform:scaleX(0.868);">BALDASSARRI MICHELI</div>
<svg class="ic" style="left:543.5px;top:273px" width="11" height="11" viewBox="0 0 11 11"><ellipse cx="7.2" cy="6.7" rx="2.5" ry="1.9" fill="#62ad3e"/><circle cx="7.0" cy="2.7" r="1.8" fill="#d79a5c"/><path d="M5.2 2.6 A1.8 1.8 0 0 1 8.8 2.6 L8.3 2.0 L6 2.2 Z" fill="#9a5a22"/><ellipse cx="3.6" cy="8.6" rx="3.2" ry="2.0" fill="#4b94dc"/><circle cx="3.2" cy="4.8" r="2.1" fill="#dca064"/><path d="M1.1 4.7 A2.1 2.1 0 0 1 5.3 4.7 L4.6 3.9 L2 4.1 Z" fill="#9c5a20"/></svg>
<div class="t" style="left:559.20px;top:276.41px;font-size:7.78px;color:#303135;letter-spacing:-0.200px;transform:scaleX(0.955);">000036</div>
<div class="t" style="left:596.80px;top:276.41px;font-size:7.78px;color:#303135;letter-spacing:-0.200px;transform:scaleX(0.951);">2021</div>
<div class="t" style="left:621.50px;top:276.41px;font-size:7.78px;color:#303135;letter-spacing:-0.058px;transform:scaleX(0.960);">28/05/2021</div>
<div class="t" style="left:662.60px;top:276.41px;font-size:7.78px;color:#303135;letter-spacing:-0.200px;transform:scaleX(0.852);">P</div>
<svg class="ic" style="left:685.8px;top:273.5px" width="12" height="11" viewBox="0 0 12 11"><ellipse cx="5.4" cy="6.3" rx="5.2" ry="3.5" fill="#3f91d0"/><ellipse cx="4.6" cy="5.6" rx="2.6" ry="1.6" fill="#5aa8e0"/><path d="M3.8 8.8 L4.4 10.6 L6.4 9.2 Z" fill="#3f91d0"/><circle cx="8.6" cy="3.3" r="2.7" fill="#72c52e"/><path d="M8.6 1.7 V4.9 M7 3.3 H10.2" stroke="#fff" stroke-width="1.1"/></svg>
<svg class="ic" style="left:26.2px;top:289.7px" width="4" height="5" viewBox="0 0 4 5"><path d="M0 0 L3.5 2.5 L0 5 Z" fill="#111"/></svg>
<svg class="ic" style="left:36px;top:287px" width="18" height="13" viewBox="0 0 18 13"><defs><linearGradient id="dg" x1="0" x2="1"><stop offset="0" stop-color="#fafafa"/><stop offset="1" stop-color="#d8d8d8"/></linearGradient><radialGradient id="sg" cx="0.45" cy="0.4" r="0.6"><stop offset="0" stop-color="#fff6a0"/><stop offset="0.6" stop-color="#f3d23a"/><stop offset="1" stop-color="#d9a514"/></radialGradient></defs><rect x="0.4" y="0.9" width="7.8" height="9" rx="0.8" fill="url(#dg)" stroke="#cdcdcd" stroke-width="0.7"/><path d="M1.7 0.8 H4.9 V7.1 L3.3 6 L1.7 7.1 Z" fill="#d9262c"/><path d="M11.60 3.00 L12.88 6.25 L16.3 6.45 L13.60 8.60 L14.50 12.10 L11.60 10.10 L8.70 12.10 L9.60 8.60 L6.9 6.45 L10.32 6.25 Z" fill="url(#sg)" stroke="#e2b524" stroke-width="0.35"/></svg>
<div class="t" style="left:173.60px;top:290.91px;font-size:7.78px;color:#303135;letter-spacing:-0.200px;transform:scaleX(0.890);">DEMO PROTOCOLLO</div>
<div class="t" style="left:468.60px;top:290.31px;font-size:7.78px;color:#303135;letter-spacing:-0.148px;transform:scaleX(0.993);">Palitalsoft</div>
<svg class="ic" style="left:543.5px;top:288px" width="11" height="11" viewBox="0 0 11 11"><ellipse cx="7.2" cy="6.7" rx="2.5" ry="1.9" fill="#62ad3e"/><circle cx="7.0" cy="2.7" r="1.8" fill="#d79a5c"/><path d="M5.2 2.6 A1.8 1.8 0 0 1 8.8 2.6 L8.3 2.0 L6 2.2 Z" fill="#9a5a22"/><ellipse cx="3.6" cy="8.6" rx="3.2" ry="2.0" fill="#4b94dc"/><circle cx="3.2" cy="4.8" r="2.1" fill="#dca064"/><path d="M1.1 4.7 A2.1 2.1 0 0 1 5.3 4.7 L4.6 3.9 L2 4.1 Z" fill="#9c5a20"/></svg>
<div class="t" style="left:559.20px;top:291.41px;font-size:7.78px;color:#303135;letter-spacing:-0.200px;transform:scaleX(0.955);">000039</div>
<div class="t" style="left:596.80px;top:291.41px;font-size:7.78px;color:#303135;letter-spacing:-0.200px;transform:scaleX(0.951);">2021</div>
<div class="t" style="left:621.50px;top:291.41px;font-size:7.78px;color:#303135;letter-spacing:-0.058px;transform:scaleX(0.960);">03/06/2021</div>
<div class="t" style="left:662.60px;top:291.41px;font-size:7.78px;color:#303135;letter-spacing:-0.200px;transform:scaleX(0.852);">P</div>
<svg class="ic" style="left:685.8px;top:288.5px" width="12" height="11" viewBox="0 0 12 11"><ellipse cx="5.4" cy="6.3" rx="5.2" ry="3.5" fill="#3f91d0"/><ellipse cx="4.6" cy="5.6" rx="2.6" ry="1.6" fill="#5aa8e0"/><path d="M3.8 8.8 L4.4 10.6 L6.4 9.2 Z" fill="#3f91d0"/><circle cx="8.6" cy="3.3" r="2.7" fill="#72c52e"/><path d="M8.6 1.7 V4.9 M7 3.3 H10.2" stroke="#fff" stroke-width="1.1"/></svg>
<svg class="ic" style="left:26.2px;top:304.7px" width="4" height="5" viewBox="0 0 4 5"><path d="M0 0 L3.5 2.5 L0 5 Z" fill="#111"/></svg>
<svg class="ic" style="left:36px;top:302px" width="18" height="13" viewBox="0 0 18 13"><defs><linearGradient id="dg" x1="0" x2="1"><stop offset="0" stop-color="#fafafa"/><stop offset="1" stop-color="#d8d8d8"/></linearGradient><radialGradient id="sg" cx="0.45" cy="0.4" r="0.6"><stop offset="0" stop-color="#fff6a0"/><stop offset="0.6" stop-color="#f3d23a"/><stop offset="1" stop-color="#d9a514"/></radialGradient></defs><rect x="0.4" y="0.9" width="7.8" height="9" rx="0.8" fill="url(#dg)" stroke="#cdcdcd" stroke-width="0.7"/><path d="M1.7 0.8 H4.9 V7.1 L3.3 6 L1.7 7.1 Z" fill="#d9262c"/><path d="M11.60 3.00 L12.88 6.25 L16.3 6.45 L13.60 8.60 L14.50 12.10 L11.60 10.10 L8.70 12.10 L9.60 8.60 L6.9 6.45 L10.32 6.25 Z" fill="url(#sg)" stroke="#e2b524" stroke-width="0.35"/></svg>
<div class="t" style="left:173.60px;top:305.91px;font-size:7.78px;color:#303135;letter-spacing:-0.200px;transform:scaleX(0.864);">AA</div>
<div class="t" style="left:468.60px;top:305.31px;font-size:7.78px;color:#303135;letter-spacing:-0.200px;transform:scaleX(0.856);">PALITALSOFT</div>
<svg class="ic" style="left:543.5px;top:303px" width="11" height="11" viewBox="0 0 11 11"><ellipse cx="7.2" cy="6.7" rx="2.5" ry="1.9" fill="#62ad3e"/><circle cx="7.0" cy="2.7" r="1.8" fill="#d79a5c"/><path d="M5.2 2.6 A1.8 1.8 0 0 1 8.8 2.6 L8.3 2.0 L6 2.2 Z" fill="#9a5a22"/><ellipse cx="3.6" cy="8.6" rx="3.2" ry="2.0" fill="#4b94dc"/><circle cx="3.2" cy="4.8" r="2.1" fill="#dca064"/><path d="M1.1 4.7 A2.1 2.1 0 0 1 5.3 4.7 L4.6 3.9 L2 4.1 Z" fill="#9c5a20"/></svg>
<div class="t" style="left:559.20px;top:306.41px;font-size:7.78px;color:#303135;letter-spacing:-0.200px;transform:scaleX(0.955);">000058</div>
<div class="t" style="left:596.80px;top:306.41px;font-size:7.78px;color:#303135;letter-spacing:-0.200px;transform:scaleX(0.951);">2021</div>
<div class="t" style="left:621.50px;top:306.41px;font-size:7.78px;color:#303135;letter-spacing:-0.058px;transform:scaleX(0.960);">27/10/2021</div>
<div class="t" style="left:662.60px;top:306.41px;font-size:7.78px;color:#303135;letter-spacing:-0.200px;transform:scaleX(0.881);">A</div>
<svg class="ic" style="left:685.8px;top:303.5px" width="12" height="11" viewBox="0 0 12 11"><ellipse cx="5.4" cy="6.3" rx="5.2" ry="3.5" fill="#3f91d0"/><ellipse cx="4.6" cy="5.6" rx="2.6" ry="1.6" fill="#5aa8e0"/><path d="M3.8 8.8 L4.4 10.6 L6.4 9.2 Z" fill="#3f91d0"/><path d="M5.8 6.5 L9.6 2 L10.8 3 L7 7.5 Z" fill="#f0b42a"/><path d="M9.6 2 L10.4 1.2 L11.6 2.2 L10.8 3 Z" fill="#d8403a"/></svg>
<div class="a" style="left:5.6px;top:392.8px;width:790.4px;height:20.6px;background:#dae7fa"></div>
<div class="a" style="left:0;top:413.6px;width:803px;height:1px;background:#959799"></div>
<div class="t" style="left:720.80px;top:400.46px;font-size:7.73px;color:#3f6089;letter-spacing:-0.200px;transform:scaleX(0.984);">Visualizzati 1 - 14 di 14</div>
<svg class="ic" style="left:0;top:0" width="803" height="418" viewBox="0 0 803 418"><rect x="13.3" y="400.4" width="6.4" height="1.1" fill="#2c68a6"/><rect x="15.4" y="399.5" width="2.2" height="1.2" fill="#2c68a6"/><path d="M13.9 402 H19.1 L18.6 407.7 H14.4 Z" fill="#2c68a6"/><path d="M15.7 402.8 V406.8 M17.3 402.8 V406.8" stroke="#9fbfe0" stroke-width="0.6"/><path d="M28 400 H32.3 L34.7 402.4 V407.7 H28 Z" fill="#2c68a6"/><path d="M32.3 400 V402.4 H34.7" fill="#b8d0ea"/><path d="M29.3 407 L30.8 404.8 L32 406 L33 405.2 L34 407 Z" fill="#a8c4e4"/><rect x="43.6" y="399.7" width="4.4" height="2" fill="#2c68a6"/><rect x="42" y="401.6" width="7.6" height="4" rx="1" fill="#2c68a6"/><rect x="43.4" y="404.6" width="4.8" height="3.1" fill="#2c68a6"/><path d="M44.3 405.6 H47.3 M44.3 406.7 H47.3" stroke="#b8d0ea" stroke-width="0.5"/><path d="M57.3 403.2 A3 3 0 0 1 62.2 401.3" stroke="#2c68a6" stroke-width="1.3" fill="none"/><path d="M63.5 403.6 A3 3 0 0 1 58.6 405.6" stroke="#2c68a6" stroke-width="1.3" fill="none"/><path d="M56.6 400.2 L59.4 400.4 L57.4 402.4 Z" fill="#2c68a6"/><path d="M64.2 406.7 L61.4 406.5 L63.4 404.5 Z" fill="#2c68a6"/><rect x="68.4" y="398" width="0.7" height="10.5" fill="#c4d3e4"/><circle cx="77.35" cy="403.45" r="2.4" fill="none" stroke="#2c68a6" stroke-width="1.5"/><path d="M77.35 400.2 V406.7 M74.1 403.45 H80.6 M75.05 401.15 L79.65 405.75 M79.65 401.15 L75.05 405.75" stroke="#2c68a6" stroke-width="1.3" stroke-dasharray="1.2 4.1 1.2"/></svg>
<div class="t" style="left:772.4px;top:387.5px;font-size:10px;color:#c4c8cc">Attiva W</div>
<div class="t" style="left:770px;top:401px;font-size:7px;color:#c8ccd0">Passa a Im</div>
<svg class="ic" style="left:0;top:0" width="803" height="418" viewBox="0 0 803 418"><rect x="6.55" y="385.9" width="97.85" height="26.75" rx="7.7" ry="7.7" fill="none" stroke="#1fc531" stroke-width="4.6"/><path d="M33.20 394.30 L55.41 353.06 L60.08 358.84 L93.39 326.33 L102.61 335.77 L69.30 368.29 L74.97 373.10 Z M45.17 382.61 L56.24 362.05 L59.64 366.26 L93.30 333.40 L95.54 335.69 L61.87 368.55 L65.99 372.04 Z" fill="#e8161e" fill-rule="evenodd"/></svg>
</body></html>
